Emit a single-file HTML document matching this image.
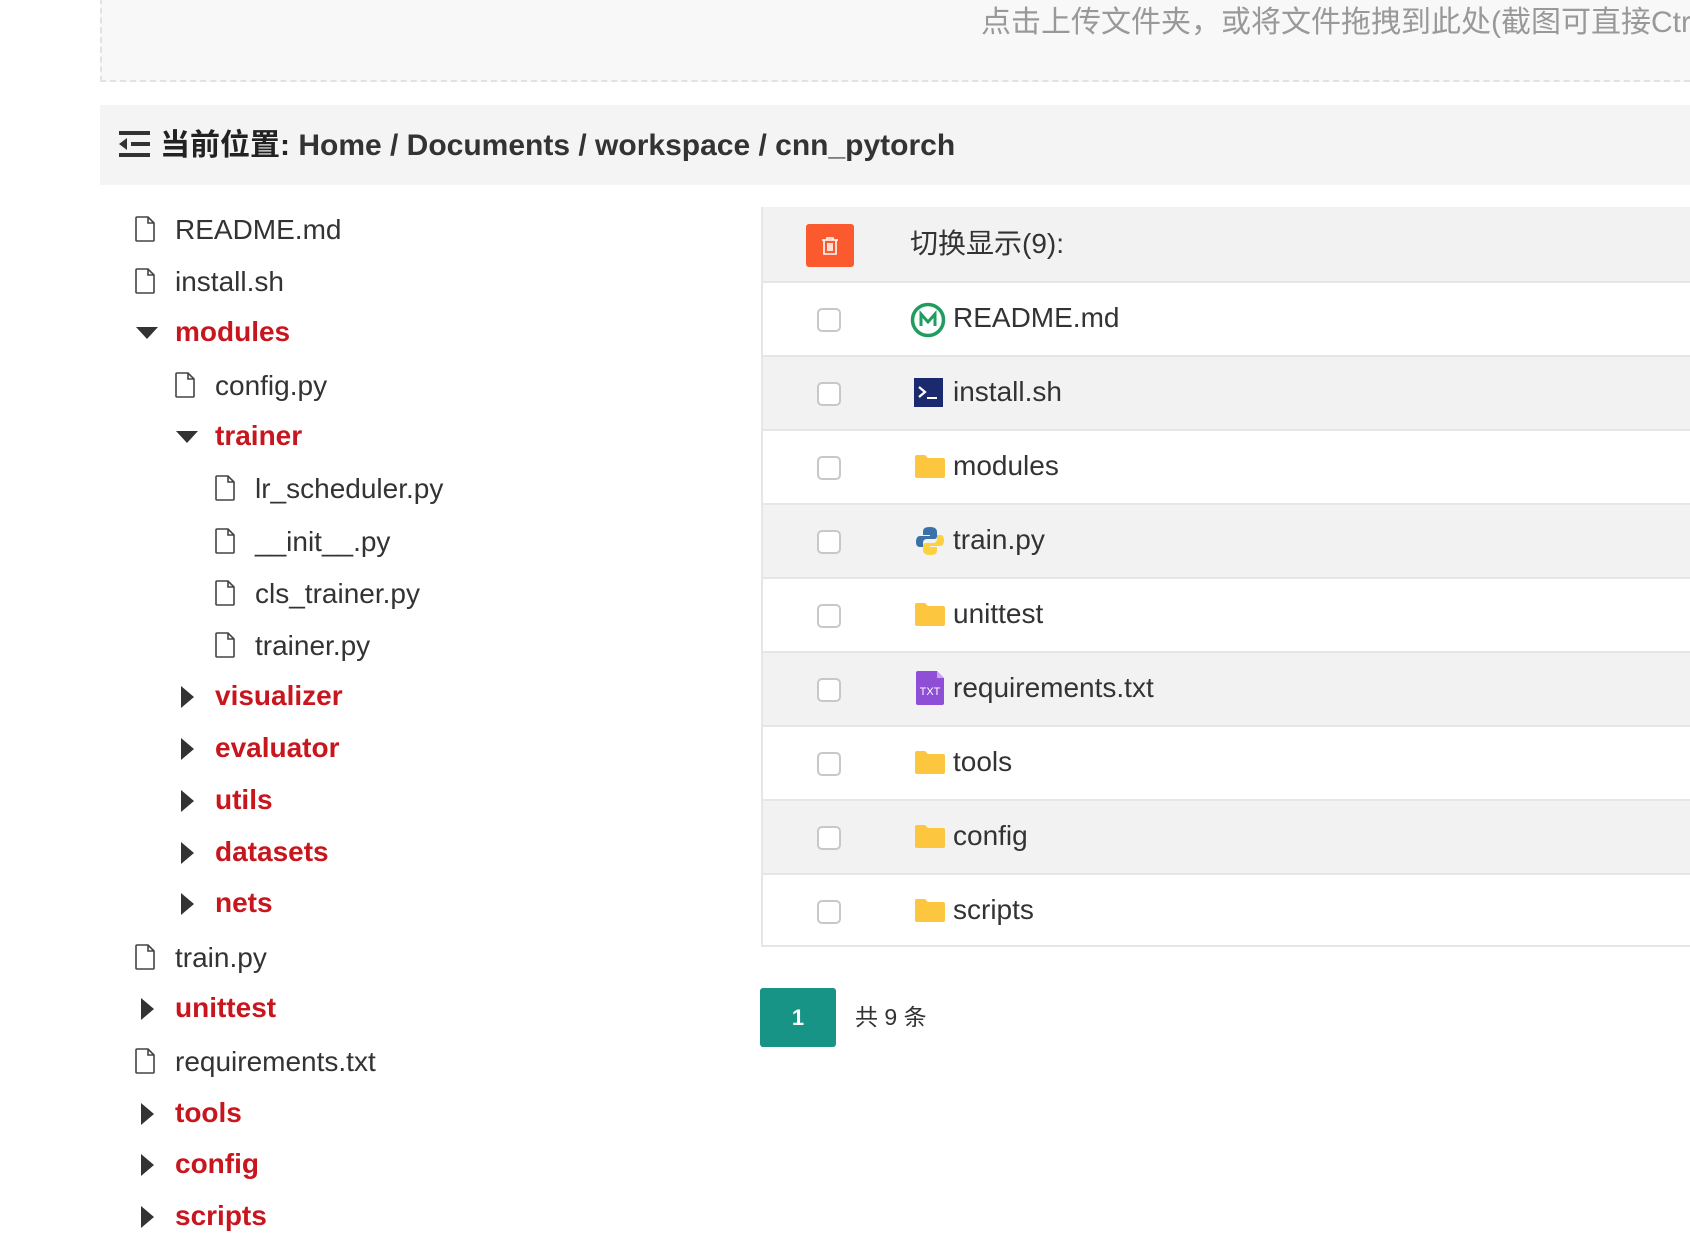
<!DOCTYPE html>
<html><head><meta charset="utf-8"><style>
*{margin:0;padding:0;box-sizing:border-box}
body{width:1690px;height:1230px;overflow:hidden;background:#fff;font-family:"Liberation Sans","Noto Sans CJK SC",sans-serif;color:#333;position:relative}
.a{position:absolute;white-space:nowrap}
.up{left:100px;top:-2px;width:1600px;height:84px;background:#f8f8f8;border:2px dashed #e2e2e2}
.bc{left:100px;top:105px;width:1600px;height:80px;background:#f4f4f4}
.t{font-size:28px;line-height:34px}
.r{color:#c8161e;font-weight:bold}
.fi{width:20px;height:26px}
.tri-d{width:0;height:0;border-left:11px solid transparent;border-right:11px solid transparent;border-top:12px solid #333}
.tri-r{width:0;height:0;border-top:11px solid transparent;border-bottom:11px solid transparent;border-left:13px solid #333}
.tbl{left:761px;top:207px;width:1000px;height:740px;border:2px solid #e6e6e6;border-right:none}
.row{position:absolute;left:0;width:1000px;height:74px;border-top:2px solid #e6e6e6}
.cb{position:absolute;left:54px;top:25px;width:24px;height:24px;border:2px solid #c8c8c8;border-radius:5px;background:#fff}
.nm{position:absolute;left:190px;top:18px;font-size:28px;line-height:34px;color:#333}
.ic{position:absolute;left:150px;top:22px}
</style></head><body>
<div class="a up"></div>
<div class="a" style="left:981px;top:4px;font-size:30px;color:#999;line-height:38px">点击上传文件夹，或将文件拖拽到此处(截图可直接Ctrl+V)</div>
<div class="a bc"></div>
<svg class="a" style="left:119px;top:131px" width="32" height="26" viewBox="0 0 32 26"><rect x="0" y="0" width="31" height="4" fill="#333"/><rect x="12" y="11" width="19" height="4" fill="#333"/><rect x="0" y="22" width="31" height="4" fill="#333"/><path d="M0 13 L8 7 L8 19 Z" fill="#333"/></svg>
<div class="a" style="left:160px;top:127px;font-size:30px;font-weight:bold;line-height:38px;color:#222">当前位置: <span style="color:#333">Home / Documents / workspace / cnn_pytorch</span></div>

<!-- tree -->
<svg width="0" height="0" style="position:absolute"><defs><symbol id="f" viewBox="0 0 20 26"><path d="M2 1 H13 L19 7 V24 a1 1 0 0 1 -1 1 H2 a1 1 0 0 1 -1 -1 V2 a1 1 0 0 1 1 -1 Z M13 1 V7 H19" fill="none" stroke="#444" stroke-width="1.6"/></symbol></defs></svg>
<svg class="a fi" style="left:135px;top:216px"><use href="#f"/></svg><div class="a t" style="left:175px;top:213px">README.md</div>
<svg class="a fi" style="left:135px;top:268px"><use href="#f"/></svg><div class="a t" style="left:175px;top:265px">install.sh</div>
<div class="a tri-d" style="left:136px;top:327px"></div><div class="a t r" style="left:175px;top:315px">modules</div>
<svg class="a fi" style="left:175px;top:372px"><use href="#f"/></svg><div class="a t" style="left:215px;top:369px">config.py</div>
<div class="a tri-d" style="left:176px;top:431px"></div><div class="a t r" style="left:215px;top:419px">trainer</div>
<svg class="a fi" style="left:215px;top:475px"><use href="#f"/></svg><div class="a t" style="left:255px;top:472px">lr_scheduler.py</div>
<svg class="a fi" style="left:215px;top:528px"><use href="#f"/></svg><div class="a t" style="left:255px;top:525px">__init__.py</div>
<svg class="a fi" style="left:215px;top:580px"><use href="#f"/></svg><div class="a t" style="left:255px;top:577px">cls_trainer.py</div>
<svg class="a fi" style="left:215px;top:632px"><use href="#f"/></svg><div class="a t" style="left:255px;top:629px">trainer.py</div>
<div class="a tri-r" style="left:181px;top:686px"></div><div class="a t r" style="left:215px;top:679px">visualizer</div>
<div class="a tri-r" style="left:181px;top:738px"></div><div class="a t r" style="left:215px;top:731px">evaluator</div>
<div class="a tri-r" style="left:181px;top:790px"></div><div class="a t r" style="left:215px;top:783px">utils</div>
<div class="a tri-r" style="left:181px;top:842px"></div><div class="a t r" style="left:215px;top:835px">datasets</div>
<div class="a tri-r" style="left:181px;top:893px"></div><div class="a t r" style="left:215px;top:886px">nets</div>
<svg class="a fi" style="left:135px;top:944px"><use href="#f"/></svg><div class="a t" style="left:175px;top:941px">train.py</div>
<div class="a tri-r" style="left:141px;top:998px"></div><div class="a t r" style="left:175px;top:991px">unittest</div>
<svg class="a fi" style="left:135px;top:1048px"><use href="#f"/></svg><div class="a t" style="left:175px;top:1045px">requirements.txt</div>
<div class="a tri-r" style="left:141px;top:1103px"></div><div class="a t r" style="left:175px;top:1096px">tools</div>
<div class="a tri-r" style="left:141px;top:1154px"></div><div class="a t r" style="left:175px;top:1147px">config</div>
<div class="a tri-r" style="left:141px;top:1206px"></div><div class="a t r" style="left:175px;top:1199px">scripts</div>

<!-- table -->
<div class="a tbl">
 <div class="row" style="top:-2px;height:76px;background:#f2f2f2;border-top:none">
  <div style="position:absolute;left:43px;top:17px;width:48px;height:43px;background:#fb5a2e;border-radius:3px"></div>
  <svg style="position:absolute;left:57px;top:29px" width="20" height="20" viewBox="0 0 20 20"><path d="M2 4 H18 M7 4 V2 H13 V4 M4 4 V18 H16 V4 M8 7 V15 M10 7 V15 M12 7 V15" fill="none" stroke="#fff" stroke-width="1.6"/></svg>
  <div class="nm" style="top:20px;left:147px">切换显示(9):</div>
 </div>
 <div class="row" style="top:72px;background:#fff"><div class="cb"></div>
  <svg class="ic" style="left:147px;top:19px" width="36" height="36" viewBox="0 0 36 36"><circle cx="18" cy="18" r="15.5" fill="none" stroke="#1f9d5e" stroke-width="3.5"/><path d="M11 24 V12 L18 20 L25 12 V24" fill="none" stroke="#1f9d5e" stroke-width="3"/></svg>
  <div class="nm">README.md</div></div>
 <div class="row" style="top:146px;background:#f2f2f2"><div class="cb"></div>
  <svg class="ic" style="left:151px;top:21px" width="29" height="29"><rect width="29" height="29" fill="#1b2a6e"/><path d="M5 9 L11 14 L5 19" fill="none" stroke="#fff" stroke-width="2.2"/><rect x="13" y="19" width="10" height="2" fill="#fff"/></svg>
  <div class="nm">install.sh</div></div>
 <div class="row" style="top:220px;background:#fff"><div class="cb"></div>
  <svg class="ic" style="left:152px;top:23px" width="30" height="24"><path d="M0 3 a2 2 0 0 1 2 -2 H10 L13 4 H28 a2 2 0 0 1 2 2 V22 a2 2 0 0 1 -2 2 H2 a2 2 0 0 1 -2 -2 Z" fill="#fcc63e"/></svg>
  <div class="nm">modules</div></div>
 <div class="row" style="top:294px;background:#f2f2f2"><div class="cb"></div>
  <svg class="ic" style="left:152px;top:21px" width="30" height="30" viewBox="0 0 30 30"><path d="M15 1 C9 1 8 3 8 6 V9 H15 V10 H5 C2 10 1 13 1 16 C1 20 3 21 5 21 H8 V17 C8 14 10 13 12 13 H19 C21 13 22 12 22 10 V6 C22 3 20 1 15 1 Z" fill="#3a72a8"/><path d="M15 29 C21 29 22 27 22 24 V21 H15 V20 H25 C28 20 29 17 29 14 C29 10 27 9 25 9 H22 V13 C22 16 20 17 18 17 H11 C9 17 8 18 8 20 V24 C8 27 10 29 15 29 Z" fill="#fcd13f"/></svg>
  <div class="nm">train.py</div></div>
 <div class="row" style="top:368px;background:#fff"><div class="cb"></div>
  <svg class="ic" style="left:152px;top:23px" width="30" height="24"><path d="M0 3 a2 2 0 0 1 2 -2 H10 L13 4 H28 a2 2 0 0 1 2 2 V22 a2 2 0 0 1 -2 2 H2 a2 2 0 0 1 -2 -2 Z" fill="#fcc63e"/></svg>
  <div class="nm">unittest</div></div>
 <div class="row" style="top:442px;background:#f2f2f2"><div class="cb"></div>
  <svg class="ic" style="left:153px;top:18px" width="28" height="34"><path d="M2 0 H21 L28 7 V32 a2 2 0 0 1 -2 2 H2 a2 2 0 0 1 -2 -2 V2 a2 2 0 0 1 2 -2 Z" fill="#8e4fd6"/><path d="M21 0 V7 H28 Z" fill="#c9a6f0"/><text x="14" y="24" font-size="11" fill="#fff" text-anchor="middle" font-family="Liberation Sans">TXT</text></svg>
  <div class="nm">requirements.txt</div></div>
 <div class="row" style="top:516px;background:#fff"><div class="cb"></div>
  <svg class="ic" style="left:152px;top:23px" width="30" height="24"><path d="M0 3 a2 2 0 0 1 2 -2 H10 L13 4 H28 a2 2 0 0 1 2 2 V22 a2 2 0 0 1 -2 2 H2 a2 2 0 0 1 -2 -2 Z" fill="#fcc63e"/></svg>
  <div class="nm">tools</div></div>
 <div class="row" style="top:590px;background:#f2f2f2"><div class="cb"></div>
  <svg class="ic" style="left:152px;top:23px" width="30" height="24"><path d="M0 3 a2 2 0 0 1 2 -2 H10 L13 4 H28 a2 2 0 0 1 2 2 V22 a2 2 0 0 1 -2 2 H2 a2 2 0 0 1 -2 -2 Z" fill="#fcc63e"/></svg>
  <div class="nm">config</div></div>
 <div class="row" style="top:664px;background:#fff;border-bottom:2px solid #e6e6e6"><div class="cb"></div>
  <svg class="ic" style="left:152px;top:23px" width="30" height="24"><path d="M0 3 a2 2 0 0 1 2 -2 H10 L13 4 H28 a2 2 0 0 1 2 2 V22 a2 2 0 0 1 -2 2 H2 a2 2 0 0 1 -2 -2 Z" fill="#fcc63e"/></svg>
  <div class="nm">scripts</div></div>
</div>

<div class="a" style="left:760px;top:988px;width:76px;height:59px;background:#179485;border-radius:3px;color:#fff;font-size:22px;font-weight:bold;text-align:center;line-height:59px">1</div>
<div class="a" style="left:855px;top:1002px;font-size:23px;line-height:30px;color:#333">共 9 条</div>
</body></html>
